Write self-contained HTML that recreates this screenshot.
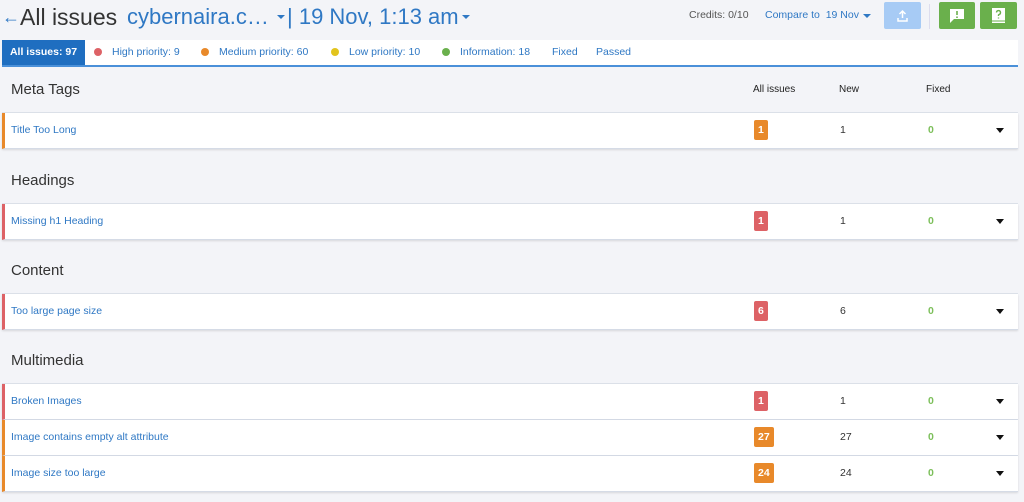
<!DOCTYPE html>
<html><head><style>
*{box-sizing:border-box;margin:0;padding:0}
body{width:1024px;height:502px;overflow:hidden;background:#f3f4f8;font-family:"Liberation Sans",sans-serif;position:relative}
.abs{position:absolute}
.top{top:3px;height:28px;line-height:28px;white-space:nowrap}
.tabs{position:absolute;left:2px;top:40px;width:1016px;height:27px;background:#fff;border-bottom:2px solid #4a90d9;font-size:10.5px;color:#2f78c4}
.tabs span{position:absolute;top:0;line-height:25px;white-space:nowrap}
.dot{display:inline-block;width:8px;height:8px;border-radius:50%;margin-right:10px;vertical-align:-1px}
.sec{position:absolute;left:2px;width:1016px}
.sh{height:46px;line-height:46px;padding-left:9px;font-size:15px;color:#333;border-bottom:1px solid #dde2ea;position:relative}
.row{height:36px;background:#fff;border-left:3px solid;border-bottom:1px solid #d5dbe6;position:relative;font-size:10.5px;box-shadow:0 1px 2px rgba(0,0,0,.12)}
.row .t{position:absolute;left:6px;top:0;line-height:35px;color:#2f78c4}
.b{position:absolute;left:749px;top:7px;height:20px;line-height:20px;padding:0 4px;color:#fff;font-weight:bold;border-radius:2px;font-size:10.5px}
.n{position:absolute;left:835px;line-height:35px;color:#333}
.f{position:absolute;left:923px;line-height:35px;color:#7cbf5a;font-weight:bold}
.ar{position:absolute;left:991px;top:15px;border:4px solid transparent;border-top:5px solid #111;border-bottom:0}
.hc{position:absolute;top:0;font-size:10px;color:#222}
.o{border-left-color:#e8892a}.r{border-left-color:#dd6266}
.bo{background:#e8892a}.br{background:#dd6266}
</style></head><body>
<div class="abs top" style="left:2px;font-size:23px;color:#333"><span style="color:#2f78c4;font-size:18px;vertical-align:2px">←</span>All issues</div>
<div class="abs top" style="left:127px;font-size:22px;color:#2f78c4">cybernaira.c…</div>
<div class="abs" style="left:277px;top:15px;border:4px solid transparent;border-top:4px solid #2f78c4;border-bottom:0"></div>
<div class="abs top" style="left:287px;font-size:22px;color:#2f78c4">| 19 Nov, 1:13 am</div>
<div class="abs" style="left:462px;top:15px;border:4px solid transparent;border-top:4px solid #2f78c4;border-bottom:0"></div>
<div class="abs" style="left:689px;top:9px;font-size:10.5px;color:#555">Credits: 0/10</div>
<div class="abs" style="left:765px;top:9px;font-size:10.5px;color:#2f78c4">Compare to&nbsp; 19 Nov</div>
<div class="abs" style="left:863px;top:14px;border:4px solid transparent;border-top:4px solid #2f78c4;border-bottom:0"></div>
<div class="abs" style="left:884px;top:2px;width:37px;height:27px;background:#a7cbf5;border-radius:2px"><svg width="37" height="27"><path d="M18.5 9v7M15.5 12l3-3 3 3M14 16v3h9v-3" stroke="#fff" stroke-width="1.5" fill="none"/></svg></div>
<div class="abs" style="left:929px;top:4px;width:1px;height:25px;background:#dde"></div>
<div class="abs" style="left:939px;top:2px;width:36px;height:27px;background:#6ab04c;border-radius:2px"><svg width="36" height="27"><path d="M11 7h14v10H15l-4 4z" fill="#fff"/><path d="M18 9v4M18 14.5v1.5" stroke="#6ab04c" stroke-width="1.6"/></svg></div>
<div class="abs" style="left:980px;top:2px;width:37px;height:27px;background:#6ab04c;border-radius:2px"><svg width="37" height="27"><path d="M12 6h13v15H12z" fill="#fff"/><path d="M12 19h13" stroke="#6ab04c"/><path d="M16.5 10.5a2 2 0 1 1 2.5 2l-.5.5v1M18.5 15.5v1" stroke="#6ab04c" stroke-width="1.4" fill="none"/></svg></div>

<div class="tabs">
<span style="left:0;width:83px;background:#1f6ec0;color:#fff;font-weight:bold;text-align:center;height:25px">All issues: 97</span>
<span style="left:92px"><i class="dot" style="background:#dd6266"></i>High priority: 9</span>
<span style="left:199px"><i class="dot" style="background:#e8892a"></i>Medium priority: 60</span>
<span style="left:329px"><i class="dot" style="background:#e2c41e"></i>Low priority: 10</span>
<span style="left:440px"><i class="dot" style="background:#6ab04c"></i>Information: 18</span>
<span style="left:550px">Fixed</span>
<span style="left:594px">Passed</span>
</div>

<div class="sec" style="top:67px">
<div class="sh">Meta Tags<span class="hc" style="left:751px">All issues</span><span class="hc" style="left:837px">New</span><span class="hc" style="left:924px">Fixed</span></div>
<div class="row o"><span class="t">Title Too Long</span><span class="b bo">1</span><span class="n">1</span><span class="f">0</span><i class="ar"></i></div>
</div>
<div class="sec" style="top:158px">
<div class="sh">Headings</div>
<div class="row r"><span class="t">Missing h1 Heading</span><span class="b br">1</span><span class="n">1</span><span class="f">0</span><i class="ar"></i></div>
</div>
<div class="sec" style="top:248px">
<div class="sh">Content</div>
<div class="row r"><span class="t">Too large page size</span><span class="b br">6</span><span class="n">6</span><span class="f">0</span><i class="ar"></i></div>
</div>
<div class="sec" style="top:338px">
<div class="sh">Multimedia</div>
<div class="row r"><span class="t">Broken Images</span><span class="b br">1</span><span class="n">1</span><span class="f">0</span><i class="ar"></i></div>
<div class="row o"><span class="t">Image contains empty alt attribute</span><span class="b bo">27</span><span class="n">27</span><span class="f">0</span><i class="ar"></i></div>
<div class="row o"><span class="t">Image size too large</span><span class="b bo">24</span><span class="n">24</span><span class="f">0</span><i class="ar"></i></div>
</div>
</body></html>
